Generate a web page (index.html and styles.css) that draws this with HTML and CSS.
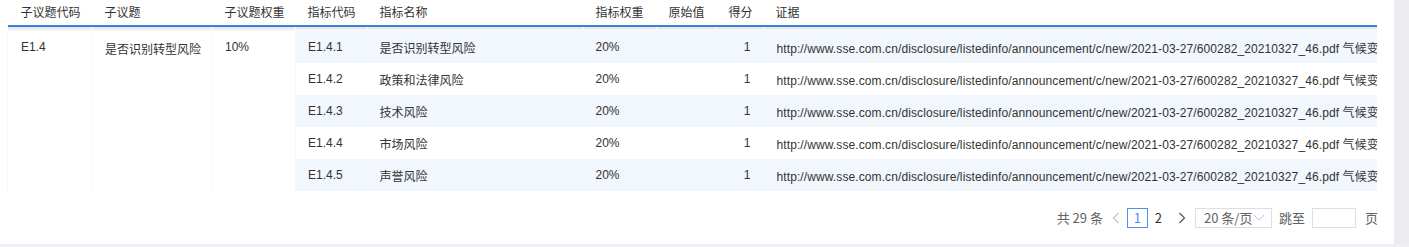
FILE: index.html
```html
<!DOCTYPE html>
<html lang="zh-CN">
<head>
<meta charset="utf-8">
<title>子议题指标</title>
<link rel="stylesheet" href="styles.css">
</head>
<body>
<div class="page">
  <div class="main">
    <div class="panel">
      <table class="grid">
        <colgroup>
          <col class="c1"><col class="c2"><col class="c3"><col class="c4"><col class="c5"><col class="c6"><col class="c7"><col class="c8"><col class="c9">
        </colgroup>
        <thead>
          <tr class="head">
            <th>子议题代码</th><th>子议题</th><th>子议题权重</th><th>指标代码</th><th>指标名称</th><th>指标权重</th><th>原始值</th><th>得分</th><th>证据</th>
          </tr>
          <tr class="shade">
            <td></td><td></td><td></td><td></td><td></td><td></td><td></td><td></td><td></td>
          </tr>
        </thead>
        <tbody>
          <tr class="odd">
            <td class="span" rowspan="5">E1.4</td>
            <td class="span" rowspan="5">是否识别转型风险</td>
            <td class="span" rowspan="5">10%</td>
            <td>E1.4.1</td><td>是否识别转型风险</td><td>20%</td><td></td><td class="num">1</td>
            <td class="ev"><div class="clip">http://www.sse.com.cn/disclosure/listedinfo/announcement/c/new/2021-03-27/600282_20210327_46.pdf 气候变化风险与机遇分析报告</div></td>
          </tr>
          <tr>
            <td>E1.4.2</td><td>政策和法律风险</td><td>20%</td><td></td><td class="num">1</td>
            <td class="ev"><div class="clip">http://www.sse.com.cn/disclosure/listedinfo/announcement/c/new/2021-03-27/600282_20210327_46.pdf 气候变化风险与机遇分析报告</div></td>
          </tr>
          <tr class="odd">
            <td>E1.4.3</td><td>技术风险</td><td>20%</td><td></td><td class="num">1</td>
            <td class="ev"><div class="clip">http://www.sse.com.cn/disclosure/listedinfo/announcement/c/new/2021-03-27/600282_20210327_46.pdf 气候变化风险与机遇分析报告</div></td>
          </tr>
          <tr>
            <td>E1.4.4</td><td>市场风险</td><td>20%</td><td></td><td class="num">1</td>
            <td class="ev"><div class="clip">http://www.sse.com.cn/disclosure/listedinfo/announcement/c/new/2021-03-27/600282_20210327_46.pdf 气候变化风险与机遇分析报告</div></td>
          </tr>
          <tr class="odd">
            <td>E1.4.5</td><td>声誉风险</td><td>20%</td><td></td><td class="num">1</td>
            <td class="ev"><div class="clip">http://www.sse.com.cn/disclosure/listedinfo/announcement/c/new/2021-03-27/600282_20210327_46.pdf 气候变化风险与机遇分析报告</div></td>
          </tr>
        </tbody>
      </table>
      <div class="pager">
        <span class="total">共 29 条</span>
        <span class="arrow prev">
          <svg width="8" height="12" viewBox="0 0 8 12"><path d="M6.5 1 L1.5 6 L6.5 11" fill="none" stroke="#c0c4cc" stroke-width="1.2"/></svg>
        </span>
        <span class="pnum active">1</span>
        <span class="pnum">2</span>
        <span class="arrow next">
          <svg width="8" height="12" viewBox="0 0 8 12"><path d="M1.5 1 L6.5 6 L1.5 11" fill="none" stroke="#555" stroke-width="1.2"/></svg>
        </span>
        <span class="select">20 条/页
          <svg class="caret" width="12" height="8" viewBox="0 0 12 8"><path d="M1 1 L6 6 L11 1" fill="none" stroke="#c0c4cc" stroke-width="1"/></svg>
        </span>
        <span class="jump">跳至</span>
        <span class="input"></span>
        <span class="unit">页</span>
      </div>
    </div>
    <div class="scroll"></div>
  </div>
  <div class="foot"></div>
</div>
</body>
</html>
```

FILE: styles.css
```css
* { box-sizing: border-box; }
html, body { margin: 0; padding: 0; background: #fff; }
body {
  font-family: "Liberation Sans", "Noto Sans CJK SC", sans-serif;
  font-size: 12px;
  color: #333;
  width: 1409px;
  height: 247px;
  overflow: hidden;
}
.page { width: 1409px; height: 247px; display: flex; flex-direction: column; }
.main { display: flex; height: 244px; }
.panel { width: 1394px; padding-left: 7px; background: #fff; }
.scroll { width: 15px; background: #ececf0; }
.foot { height: 3px; background: #eef0f4; }

.grid {
  width: 1369px;
  border-collapse: collapse;
  table-layout: fixed;
}
.c1 { width: 85px; } .c2 { width: 120px; } .c3 { width: 83px; }
.c4 { width: 72px; } .c5 { width: 216px; } .c6 { width: 73px; }
.c7 { width: 60px; } .c8 { width: 47px; } .c9 { width: 613px; }

.head th {
  height: 26px;
  padding: 0 12px 2px 12px;
  text-align: left;
  font-weight: normal;
  color: #333;
  border-bottom: 2px solid #3b7fe0;
  white-space: nowrap;
  vertical-align: middle;
}
.head th:first-child { padding-left: 13px; }
.shade td {
  height: 5px;
  padding: 0;
  background: linear-gradient(#e4e4e4, #f9f9f9);
  border-left: 1px solid #fafafa;
}
.shade td:first-child { border-left: none; }

tbody td {
  height: 32px;
  padding: 0 12px;
  white-space: nowrap;
  vertical-align: middle;
  color: #333;
}
tbody tr.odd td { background: #f2f6fd; }
tbody td.span {
  background: #fff !important;
  vertical-align: top;
  padding-top: 9px;
  border-right: 1px solid #f8f8f8;
}
tbody td.span:first-child { border-left: 1px solid #f8f8f8; padding-left: 13px; }
tbody td.num { text-align: right; padding-right: 13px; }
tbody td.ev { padding-right: 0; padding-left: 13px; }
.clip { overflow: hidden; white-space: nowrap; letter-spacing: 0.1px; }

.pager {
  display: flex;
  justify-content: flex-end;
  align-items: center;
  height: 53px;
  padding-right: 16px;
  font-family: "Noto Sans CJK SC", "Liberation Sans", sans-serif;
  font-size: 13px;
  color: #606266;
}
.total { margin-right: 6px; }
.arrow { display: flex; align-items: center; justify-content: center; width: 14px; height: 20px; }
.prev { margin-right: 4px; }
.pnum {
  height: 20px;
  width: 21px;
  display: flex; align-items: center; justify-content: center;
  color: #333;
}
.pnum.active { border: 1px solid #4f8ef7; color: #4f8ef7; }
.next { margin-left: 6px; margin-right: 6px; }
.select {
  width: 77px;
  height: 20px;
  border: 1px solid #dcdfe6;
  display: flex; align-items: center;
  padding-left: 8px;
  color: #606266;
  position: relative;
}
.caret { position: absolute; right: 6px; top: 5px; }
.jump { margin-left: 7px; margin-right: 7px; }
.input { width: 44px; height: 20px; border: 1px solid #dcdfe6; }
.unit { margin-left: 9px; }
```
